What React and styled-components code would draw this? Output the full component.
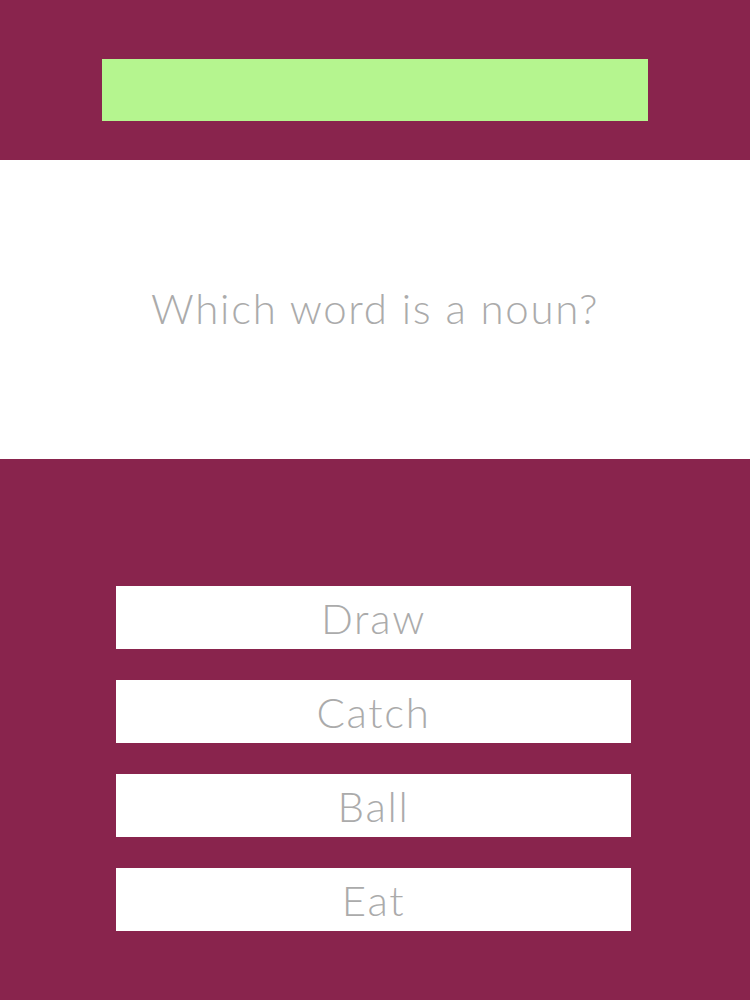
import React from "react";
import styled, { createGlobalStyle } from "styled-components";

const Global = createGlobalStyle`
  html, body { margin: 0; padding: 0; background: #89244d; }
  body { font-family: Lato, "Open Sans", sans-serif; }
`;

const Page = styled.div`
  width: 750px;
  min-height: 1000px;
  background: #89244d;
  display: flex;
  flex-direction: column;
`;

const Header = styled.div`
  display: flex;
  justify-content: center;
  padding: 59px 0 39px;
`;

const Progress = styled.div`
  width: 546px;
  height: 62px;
  background: #b5f58f;
`;

const QuestionPanel = styled.div`
  height: 299px;
  background: #ffffff;
  display: flex;
  align-items: center;
  justify-content: center;
`;

const Question = styled.h1`
  margin: 0 0 4px;
  font-family: Lato, sans-serif;
  font-weight: 300;
  font-size: 42px;
  letter-spacing: 1.7px;
  color: #ababab;
`;

const Answers = styled.div`
  display: flex;
  flex-direction: column;
  align-items: center;
  gap: 31px;
  padding: 127px 3px 0 0;
`;

const Answer = styled.button`
  width: 515px;
  height: 63px;
  border: none;
  background: #ffffff;
  font-family: Lato, sans-serif;
  font-weight: 300;
  font-size: 42px;
  letter-spacing: 1.7px;
  color: #ababab;
  padding: 0;
  display: flex;
  align-items: center;
  justify-content: center;
  cursor: pointer;
`;

export default function App() {
  const options = ["Draw", "Catch", "Ball", "Eat"];
  return (
    <Page>
      <Global />
      <Header>
        <Progress />
      </Header>
      <QuestionPanel>
        <Question>Which word is a noun?</Question>
      </QuestionPanel>
      <Answers>
        {options.map((o) => (
          <Answer key={o}>{o}</Answer>
        ))}
      </Answers>
    </Page>
  );
}
